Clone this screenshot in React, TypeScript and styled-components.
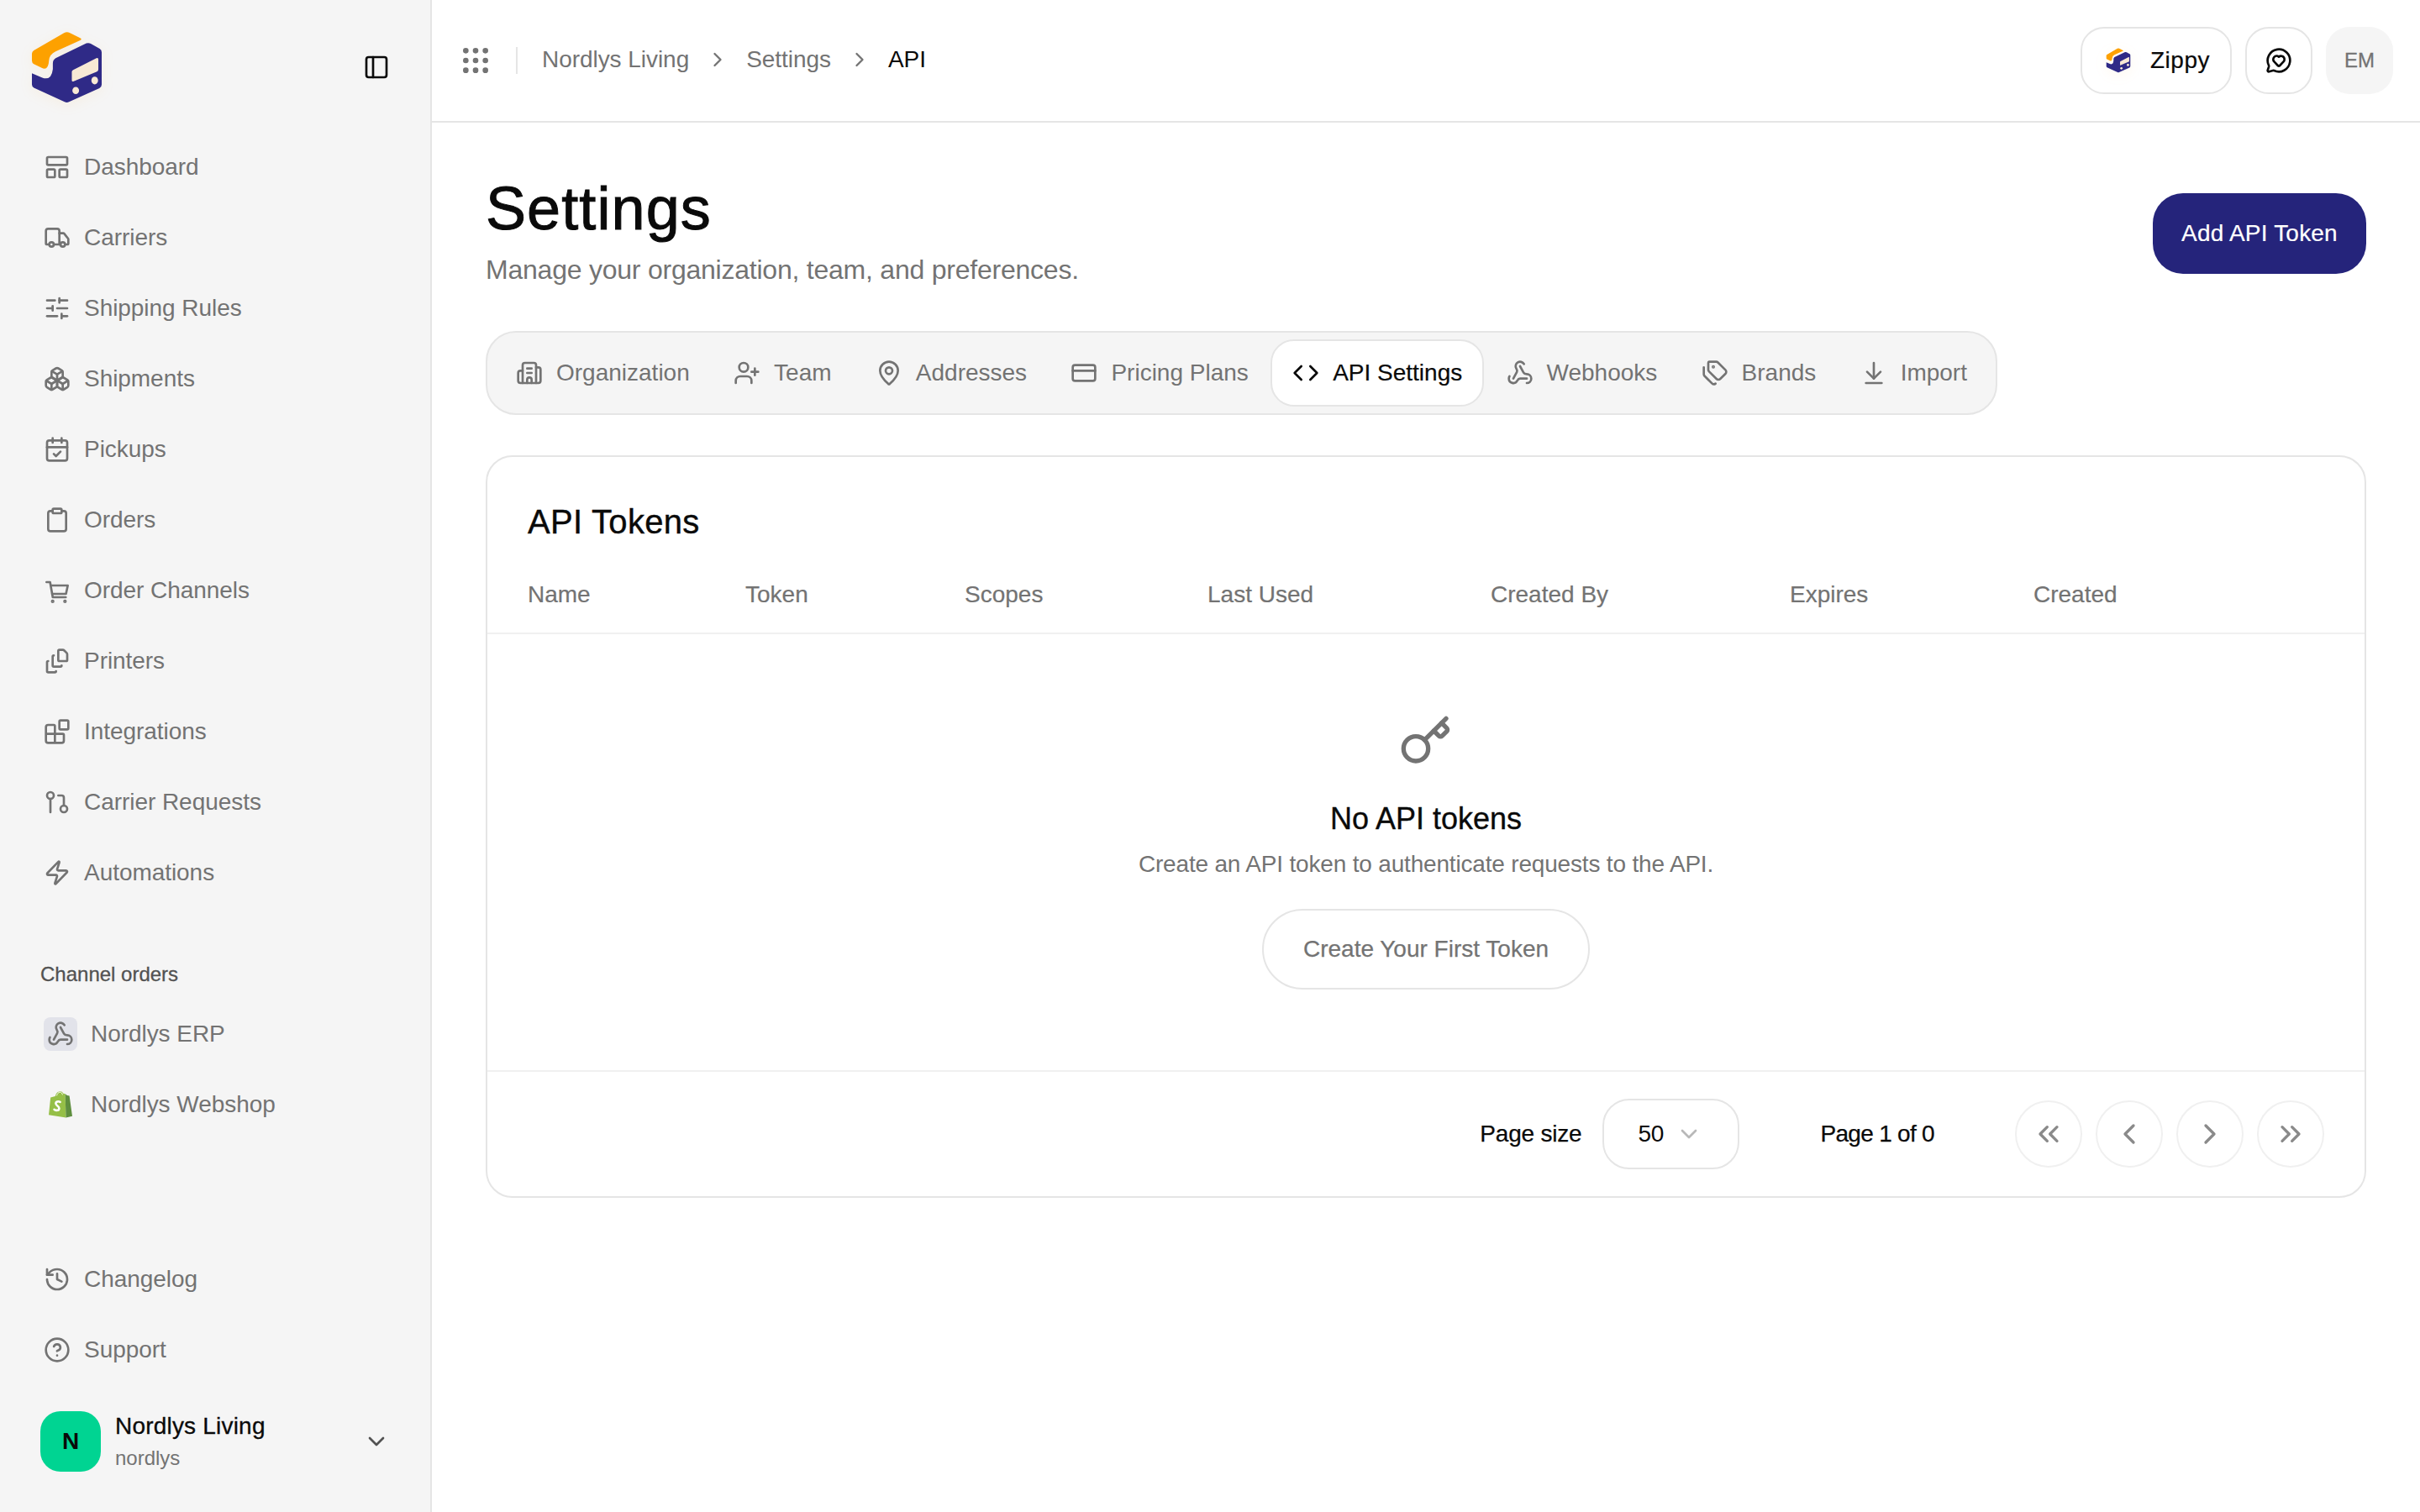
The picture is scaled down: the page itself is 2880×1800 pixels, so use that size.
import styled, { createGlobalStyle } from 'styled-components';
import {
  ArrowDownToLine,
  Blocks,
  Boxes,
  Building2,
  CalendarCheck,
  ChevronDown,
  ChevronLeft,
  ChevronRight,
  ChevronsLeft,
  ChevronsRight,
  CircleHelp,
  Clipboard,
  Code,
  CreditCard,
  FileStack,
  GitPullRequest,
  Grip,
  History,
  Key,
  LayoutPanelTop,
  MapPin,
  MessageCircleHeart,
  PanelLeft,
  SlidersHorizontal,
  Tags,
  Truck,
  UserPlus,
  Webhook,
  Zap,
} from 'lucide-react';

const GlobalStyle = createGlobalStyle`
  * {
    box-sizing: border-box;
  }
  html, body {
    margin: 0;
    background: #fff;
    color: #0a0a0a;
    font-family: "Liberation Sans", Arial, sans-serif;
    font-size: 28px;
  }
`;

const Shell = styled.div`
  display: flex;
  height: 1800px;
  width: 2880px;
  overflow: hidden;
`;

const Sidebar = styled.aside`
  width: 514px;
  flex-shrink: 0;
  display: flex;
  flex-direction: column;
  background: #f5f5f5;
  border-right: 2px solid #e5e5e5;
  padding-bottom: 48px;
`;

const Brand = styled.div`
  display: flex;
  justify-content: space-between;
  padding: 34px 48px 0 33px;
  height: 157px;
`;

const ToggleButton = styled.div`
  margin-top: 30px;
  height: 32px;
  color: #0a0a0a;
`;

const Nav = styled.nav`
  display: flex;
  flex-direction: column;
`;

const NavItem = styled.div`
  display: flex;
  align-items: center;
  gap: 16px;
  height: 84px;
  padding-left: 52px;
  color: #737373;
  letter-spacing: -0.05px;
`;

const GroupLabel = styled.div`
  margin-top: 63px;
  padding-left: 48px;
  height: 32px;
  line-height: 32px;
  font-size: 24px;
  color: #525252;
  -webkit-text-stroke: 0.3px currentColor;
`;

const ChannelList = styled.div`
  display: flex;
  flex-direction: column;
  margin-top: 13px;
`;

const ChannelIcon = styled.span<{ $tile?: boolean }>`
  width: 40px;
  height: 40px;
  border-radius: 8px;
  display: flex;
  align-items: center;
  justify-content: center;
  background: ${(props) => (props.$tile ? '#e2e3ea' : 'transparent')};
`;

const SidebarFooter = styled.div`
  margin-top: auto;
  display: flex;
  flex-direction: column;
`;

const OrgSwitcher = styled.div`
  display: flex;
  align-items: center;
  margin-top: 31px;
  padding: 0 48px;
`;

const OrgAvatar = styled.div`
  width: 72px;
  height: 72px;
  border-radius: 24px;
  background: #00d492;
  display: flex;
  align-items: center;
  justify-content: center;
  font-weight: 700;
  color: #0a0a0a;
`;

const OrgText = styled.div`
  margin-left: 17px;
  flex: 1;
  display: flex;
  flex-direction: column;
  gap: 4px;
`;

const OrgName = styled.div`
  line-height: 36px;
  letter-spacing: 0.2px;
  -webkit-text-stroke: 0.3px currentColor;
`;

const OrgSlug = styled.div`
  line-height: 32px;
  font-size: 24px;
  color: #737373;
`;

const Main = styled.main`
  flex: 1;
  min-width: 0;
  display: flex;
  flex-direction: column;
`;

const TopBar = styled.header`
  height: 146px;
  flex-shrink: 0;
  display: flex;
  align-items: center;
  border-bottom: 2px solid #e5e5e5;
  padding: 0 32px;
`;

const GripIcon = styled(Grip)`
  color: #737373;
`;

const Separator = styled.span`
  width: 2px;
  height: 32px;
  background: #e5e5e5;
  margin: 0 29px 0 28px;
`;

const Crumbs = styled.div`
  display: flex;
  align-items: center;
  gap: 20px;
  flex: 1;
  padding-bottom: 2px;
  letter-spacing: -0.05px;
`;

const Crumb = styled.span<{ $current?: boolean }>`
  color: ${(props) => (props.$current ? '#0a0a0a' : '#737373')};
`;

const CrumbArrow = styled(ChevronRight)`
  color: #737373;
`;

const TopActions = styled.div`
  display: flex;
  align-items: center;
  gap: 16px;
`;

const ZippyButton = styled.div`
  width: 180px;
  height: 80px;
  border: 2px solid #e5e5e5;
  border-radius: 28px;
  display: flex;
  align-items: center;
  justify-content: center;
  gap: 22px;
  padding-left: 3px;
  letter-spacing: 0.5px;
  -webkit-text-stroke: 0.2px currentColor;
`;

const ChatButton = styled.div`
  width: 80px;
  height: 80px;
  border: 2px solid #e5e5e5;
  border-radius: 28px;
  display: flex;
  align-items: center;
  justify-content: center;
`;

const UserBadge = styled.div`
  width: 80px;
  height: 80px;
  border-radius: 28px;
  background: #f5f5f5;
  color: #737373;
  font-size: 24px;
  display: flex;
  align-items: center;
  justify-content: center;
  -webkit-text-stroke: 0.3px currentColor;
`;

const Content = styled.div`
  padding: 62px 64px 0;
`;

const PageHead = styled.div`
  display: flex;
  justify-content: space-between;
  align-items: flex-start;
`;

const Title = styled.h1`
  margin: 0;
  font-size: 72px;
  line-height: 80px;
  font-weight: 400;
  letter-spacing: 1.1px;
  -webkit-text-stroke: 1px currentColor;
`;

const Subtitle = styled.p`
  margin: 9px 0 0;
  font-size: 32px;
  line-height: 48px;
  letter-spacing: -0.23px;
  color: #737373;
`;

const PrimaryButton = styled.div`
  margin-top: 22px;
  width: 254px;
  height: 96px;
  border-radius: 36px;
  background: #25247b;
  color: #fff;
  display: flex;
  align-items: center;
  justify-content: center;
  padding-bottom: 1px;
  letter-spacing: 0.2px;
  -webkit-text-stroke: 0.2px currentColor;
`;

const Tabs = styled.div`
  display: flex;
  gap: 0.3px;
  width: fit-content;
  margin-top: 49px;
  padding: 8px;
  background: #f5f5f5;
  border: 2px solid #e5e5e5;
  border-radius: 36px;
`;

const Tab = styled.div<{ $active?: boolean }>`
  height: 80px;
  display: flex;
  align-items: center;
  gap: 16px;
  padding: 0 24px 1px;
  border: 2px solid ${(props) => (props.$active ? '#e5e5e5' : 'transparent')};
  border-radius: 28px;
  background: ${(props) => (props.$active ? '#fff' : 'transparent')};
  color: ${(props) => (props.$active ? '#0a0a0a' : '#737373')};
  -webkit-text-stroke: ${(props) => (props.$active ? '0.2px currentColor' : '0')};
`;

const Card = styled.section`
  margin-top: 48px;
  border: 2px solid #e5e5e5;
  border-radius: 32px;
  background: #fff;
`;

const CardTitle = styled.h2`
  margin: 0;
  padding: 49px 48px 14px;
  font-size: 40px;
  line-height: 56px;
  font-weight: 400;
  letter-spacing: 0.3px;
  -webkit-text-stroke: 0.4px currentColor;
`;

const TableHead = styled.div`
  display: grid;
  grid-template-columns: 259px 261px 289px 337px 356px 290px 1fr;
  align-items: center;
  height: 92px;
  padding-left: 48px;
  border-bottom: 2px solid #f0f0f0;
  color: #737373;
  -webkit-text-stroke: 0.2px currentColor;
`;

const EmptyState = styled.div`
  display: flex;
  flex-direction: column;
  align-items: center;
  padding: 95px 0 96px;
`;

const EmptyKey = styled(Key)`
  color: #737373;
`;

const EmptyTitle = styled.div`
  margin-top: 33px;
  font-size: 36px;
  line-height: 56px;
  -webkit-text-stroke: 0.35px currentColor;
`;

const EmptyText = styled.div`
  margin-top: 6px;
  line-height: 40px;
  letter-spacing: -0.18px;
  color: #737373;
`;

const OutlineButton = styled.div`
  margin-top: 33px;
  width: 390px;
  height: 96px;
  border: 2px solid #e5e5e5;
  border-radius: 48px;
  display: flex;
  align-items: center;
  justify-content: center;
  color: #737373;
  -webkit-text-stroke: 0.25px currentColor;
`;

const Pager = styled.div`
  height: 150px;
  border-top: 2px solid #f0f0f0;
  display: flex;
  align-items: center;
  justify-content: flex-end;
  padding-right: 48px;
`;

const PagerLabel = styled.span<{ $tight?: number }>`
  letter-spacing: ${(props) => props.$tight ?? 0}px;
  -webkit-text-stroke: 0.25px currentColor;
`;

const PageSizeSelect = styled.div`
  width: 163px;
  height: 84px;
  margin: 0 96px 0 25px;
  border: 2px solid #e5e5e5;
  border-radius: 32px;
  display: flex;
  align-items: center;
  gap: 14px;
  padding-left: 40px;
  letter-spacing: -0.4px;
`;

const SelectArrow = styled(ChevronDown)`
  color: #b8b8b8;
`;

const PagerButtons = styled.div`
  display: flex;
  gap: 16px;
  margin-left: 96px;
`;

const PagerButton = styled.div`
  width: 80px;
  height: 80px;
  border: 2px solid #f0f0f0;
  border-radius: 50%;
  display: flex;
  align-items: center;
  justify-content: center;
  color: #8a8a8a;
`;

function Logo({ size }: { size: number }) {
  return (
    <svg width={size} height={size} viewBox="40 40 280 280" style={{ filter: 'drop-shadow(0 3px 8px rgba(253,161,0,0.07))' }}>
      <path
        fill="#fda100"
        d="M62 118 170 56Q180 50 190 55L228 74Q236 78 228 82L140 122Q118 132 116 155Q114 192 90 181L62 167Q55 163 55 155V130Q55 122 62 118Z"
      />
      <path
        fill="#2f2a87"
        d="M140 146 250 93Q258 90 266 94L298 112Q305 116 305 125V240Q305 250 297 254L188 303Q180 307 172 303L62 252Q55 248 55 240V200L92 216Q125 228 130 185V165Q130 152 140 146Z"
      />
      <path fill="#f8e9d5" d="M203 188 286 146Q293 143 293 150V186Q293 192 288 194L205 229Q198 232 198 225V195Q198 190 203 188Z" />
      <ellipse fill="#f8e9d5" cx="212" cy="262" rx="12" ry="13" />
      <ellipse fill="#f8e9d5" cx="280" cy="226" rx="12" ry="14" />
    </svg>
  );
}

function CartIcon({ size }: { size: number }) {
  return (
    <svg
      width={size}
      height={size}
      viewBox="0 0 24 24"
      fill="none"
      stroke="currentColor"
      strokeWidth="2"
      strokeLinecap="round"
      strokeLinejoin="round"
    >
      <path d="M2.5 4.5h3.2l2.4 13.5h11.6" />
      <path d="M6.3 7.5h15.2l-1.6 7.5H7.6" />
      <circle cx="8" cy="21.7" r="0.6" fill="currentColor" />
      <circle cx="19" cy="21.7" r="0.6" fill="currentColor" />
    </svg>
  );
}

function ShopifyBag() {
  return (
    <svg width="28" height="32" viewBox="0 0 28 32">
      <path fill="#95bf47" d="M2.2 7.6 7.8 5.9C8.7 2.6 10.8.4 13.2.3 15 .2 16.4 1 17.3 2.8L19.6 3.2 20.5 31.6 0 28.2Z" />
      <path fill="#5e8e3e" d="M19.6 3.2 21.8 5.1 24.6 5.6 28 29.8 20.5 31.6Z" />
      <path fill="none" stroke="#fff" strokeWidth="0.9" d="M9.5 5.4C10.2 2.8 11.6 1.3 13.2 1.2 15 1.1 16 2.6 16.4 4.4" />
      <path
        fill="none"
        stroke="#fff"
        strokeWidth="2.6"
        strokeLinecap="round"
        d="M13.6 12.8C11.4 11.6 8.3 12.4 8.4 14.8 8.5 17.4 12.4 17.6 12.4 20.4 12.4 23 9.4 23.6 6.6 21.8"
      />
    </svg>
  );
}

const mainNav = [
  { label: 'Dashboard', icon: LayoutPanelTop },
  { label: 'Carriers', icon: Truck },
  { label: 'Shipping Rules', icon: SlidersHorizontal },
  { label: 'Shipments', icon: Boxes },
  { label: 'Pickups', icon: CalendarCheck },
  { label: 'Orders', icon: Clipboard },
  { label: 'Order Channels', icon: CartIcon },
  { label: 'Printers', icon: FileStack },
  { label: 'Integrations', icon: Blocks },
  { label: 'Carrier Requests', icon: GitPullRequest },
  { label: 'Automations', icon: Zap },
];

const tabs = [
  { label: 'Organization', icon: Building2 },
  { label: 'Team', icon: UserPlus },
  { label: 'Addresses', icon: MapPin },
  { label: 'Pricing Plans', icon: CreditCard },
  { label: 'API Settings', icon: Code, active: true },
  { label: 'Webhooks', icon: Webhook },
  { label: 'Brands', icon: Tags },
  { label: 'Import', icon: ArrowDownToLine },
];

const columns = ['Name', 'Token', 'Scopes', 'Last Used', 'Created By', 'Expires', 'Created'];

export default function App() {
  return (
    <>
      <GlobalStyle />
      <Shell>
        <Sidebar>
          <Brand>
            <Logo size={93} />
            <ToggleButton>
              <PanelLeft size={32} />
            </ToggleButton>
          </Brand>
          <Nav>
            {mainNav.map(({ label, icon: Icon }) => (
              <NavItem key={label}>
                <Icon size={32} />
                {label}
              </NavItem>
            ))}
          </Nav>
          <GroupLabel>Channel orders</GroupLabel>
          <ChannelList>
            <NavItem>
              <ChannelIcon $tile>
                <Webhook size={32} />
              </ChannelIcon>
              Nordlys ERP
            </NavItem>
            <NavItem>
              <ChannelIcon>
                <ShopifyBag />
              </ChannelIcon>
              Nordlys Webshop
            </NavItem>
          </ChannelList>
          <SidebarFooter>
            <NavItem>
              <History size={32} />
              Changelog
            </NavItem>
            <NavItem>
              <CircleHelp size={32} />
              Support
            </NavItem>
            <OrgSwitcher>
              <OrgAvatar>N</OrgAvatar>
              <OrgText>
                <OrgName>Nordlys Living</OrgName>
                <OrgSlug>nordlys</OrgSlug>
              </OrgText>
              <ChevronDown size={32} color="#525252" />
            </OrgSwitcher>
          </SidebarFooter>
        </Sidebar>
        <Main>
          <TopBar>
            <GripIcon size={40} />
            <Separator />
            <Crumbs>
              <Crumb>Nordlys Living</Crumb>
              <CrumbArrow size={28} />
              <Crumb>Settings</Crumb>
              <CrumbArrow size={28} />
              <Crumb $current>API</Crumb>
            </Crumbs>
            <TopActions>
              <ZippyButton>
                <Logo size={32} />
                Zippy
              </ZippyButton>
              <ChatButton>
                <MessageCircleHeart size={32} />
              </ChatButton>
              <UserBadge>EM</UserBadge>
            </TopActions>
          </TopBar>
          <Content>
            <PageHead>
              <div>
                <Title>Settings</Title>
                <Subtitle>Manage your organization, team, and preferences.</Subtitle>
              </div>
              <PrimaryButton>Add API Token</PrimaryButton>
            </PageHead>
            <Tabs>
              {tabs.map(({ label, icon: Icon, active }) => (
                <Tab key={label} $active={active}>
                  <Icon size={32} />
                  {label}
                </Tab>
              ))}
            </Tabs>
            <Card>
              <CardTitle>API Tokens</CardTitle>
              <TableHead>
                {columns.map((column) => (
                  <span key={column}>{column}</span>
                ))}
              </TableHead>
              <EmptyState>
                <EmptyKey size={64} />
                <EmptyTitle>No API tokens</EmptyTitle>
                <EmptyText>Create an API token to authenticate requests to the API.</EmptyText>
                <OutlineButton>Create Your First Token</OutlineButton>
              </EmptyState>
              <Pager>
                <PagerLabel $tight={-0.2}>Page size</PagerLabel>
                <PageSizeSelect>
                  50
                  <SelectArrow size={32} />
                </PageSizeSelect>
                <PagerLabel $tight={-0.7}>Page 1 of 0</PagerLabel>
                <PagerButtons>
                  <PagerButton>
                    <ChevronsLeft size={40} />
                  </PagerButton>
                  <PagerButton>
                    <ChevronLeft size={40} />
                  </PagerButton>
                  <PagerButton>
                    <ChevronRight size={40} />
                  </PagerButton>
                  <PagerButton>
                    <ChevronsRight size={40} />
                  </PagerButton>
                </PagerButtons>
              </Pager>
            </Card>
          </Content>
        </Main>
      </Shell>
    </>
  );
}
